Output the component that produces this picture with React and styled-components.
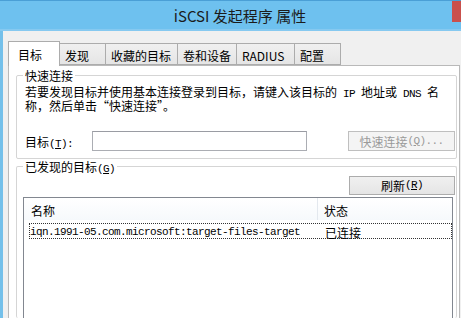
import styled, { createGlobalStyle } from "styled-components";

const Global = createGlobalStyle`
  html, body {
    margin: 0;
    background: #f0f0f0;
  }
  * {
    box-sizing: border-box;
  }
`;

const Window = styled.div`
  width: 461px;
  height: 318px;
  overflow: hidden;
  display: flex;
  flex-direction: column;
  font-family: "Noto Sans CJK SC", sans-serif;
  font-size: 12px;
  color: #000;
`;

const TitleBar = styled.div`
  height: 31px;
  flex: none;
  display: flex;
  align-items: flex-start;
  background: #6ec1ef;
  border-top: 1px solid #4a9fd6;
  box-shadow: inset 0 -2px 0 #86c9f0;
`;

const Title = styled.div`
  flex: 1;
  height: 29px;
  padding-left: 28px;
  display: flex;
  align-items: center;
  justify-content: center;
  font-size: 15px;
  color: #1b1b1b;
`;

const Close = styled.div`
  width: 9px;
  height: 21px;
  background: #c9504c;
`;

const Body = styled.div`
  flex: 1;
  display: flex;
  flex-direction: column;
  border-left: 3px solid #74c0ea;
  padding-left: 5px;
  min-height: 0;
`;

const TabStrip = styled.div`
  height: 34px;
  flex: none;
  display: flex;
  align-items: flex-end;
`;

const Tab = styled.div`
  width: ${(p) => p.$w}px;
  height: ${(p) => (p.$active ? 25 : 22)}px;
  margin-bottom: ${(p) => (p.$active ? -1 : 0)}px;
  margin-left: ${(p) => (p.$first ? 0 : -1)}px;
  padding-left: ${(p) => (p.$active ? 9 : 5)}px;
  padding-top: ${(p) => (p.$active ? 1 : 2)}px;
  display: flex;
  align-items: center;
  border: 1px solid #acacac;
  border-bottom: ${(p) => (p.$active ? "none" : "1px solid #acacac")};
  background: ${(p) =>
    p.$active ? "#ffffff" : "linear-gradient(#f0f0f0, #e5e5e5)"};
  position: relative;
  z-index: ${(p) => (p.$active ? 1 : 0)};
  white-space: nowrap;
`;

const Panel = styled.div`
  flex: 1;
  margin-right: 1px;
  background: #ffffff;
  border: 1px solid #b9b9b9;
  border-bottom: none;
  padding: 9px 2px 0 7px;
  display: flex;
  flex-direction: column;
  min-height: 0;
`;

const Group = styled.div`
  position: relative;
  border: 1px solid #d5d5d5;
  border-radius: 2px;
  margin-top: ${(p) => p.$mt || 0}px;
  padding: ${(p) => p.$pad};
  display: flex;
  flex-direction: column;
  flex: ${(p) => (p.$grow ? 1 : "none")};
  border-bottom: ${(p) => (p.$grow ? "none" : "1px solid #d5d5d5")};
  min-height: 0;
`;

const Legend = styled.span`
  position: absolute;
  top: -8px;
  left: 6px;
  padding: 0 2px;
  line-height: 16px;
  background: #ffffff;
`;

const Mono = styled.span`
  font-family: "Liberation Mono", monospace;
  font-size: 11px;
  letter-spacing: -0.6px;
  line-height: 1;
`;

const Key = styled.span`
  text-decoration: underline;
`;

const Para = styled.p`
  margin: 0 0 19px;
  line-height: 12px;
`;

const FormRow = styled.div`
  display: flex;
  align-items: center;
  height: 20px;
`;

const Label = styled.label`
  width: 67px;
  flex: none;
`;

const Input = styled.div`
  width: 215px;
  height: 20px;
  border: 1px solid #abadb3;
  border-top-color: #9a9ca3;
  background: #ffffff;
`;

const Button = styled.div`
  margin-left: auto;
  width: ${(p) => p.$w}px;
  height: ${(p) => p.$h}px;
  display: flex;
  align-items: center;
  justify-content: center;
  border: 1px solid ${(p) => (p.$disabled ? "#bfbfbf" : "#acacac")};
  background: ${(p) =>
    p.$disabled ? "#f4f4f4" : "linear-gradient(#f0f0f0, #e5e5e5)"};
  color: ${(p) => (p.$disabled ? "#9a9a9a" : "#000")};
  white-space: nowrap;
`;

const ButtonRow = styled.div`
  display: flex;
`;

const ListView = styled.div`
  flex: 1;
  margin: 2px 2px 0 6px;
  border: 1px solid #828790;
  border-bottom: none;
  background: #ffffff;
  min-height: 0;
`;

const Header = styled.div`
  display: grid;
  grid-template-columns: 294px 1fr;
  height: 22px;
  background: linear-gradient(#ffffff, #f6f9fc);
`;

const HeadCell = styled.div`
  display: flex;
  align-items: center;
  padding: 2px 0 0 ${(p) => p.$pl}px;
  border-right: ${(p) => (p.$divider ? "1px solid #e3e8ee" : "none")};
`;

const Row = styled.div`
  display: grid;
  grid-template-columns: 295px 1fr;
  align-items: center;
  height: 16px;
  margin: 3px 0 0 5px;
  border: 1px dotted #333;
`;

const tabs = [
  { label: "目标", w: 52, active: true },
  { label: "发现", w: 47 },
  { label: "收藏的目标", w: 73 },
  { label: "卷和设备", w: 60 },
  { label: "RADIUS", w: 59 },
  { label: "配置", w: 47 },
];

export default function App() {
  return (
    <Window>
      <Global />
      <TitleBar>
        <Title>iSCSI 发起程序 属性</Title>
        <Close />
      </TitleBar>
      <Body>
        <TabStrip>
          {tabs.map((t, i) => (
            <Tab key={t.label} $w={t.w} $active={t.active} $first={i === 0}>
              {t.label}
            </Tab>
          ))}
        </TabStrip>
        <Panel>
          <Group $pad="10px 1px 7px 8px">
            <Legend>快速连接</Legend>
            <Para>
              若要发现目标并使用基本连接登录到目标，请键入该目标的
              <Mono> IP </Mono>地址或<Mono> DNS </Mono>名
              <br />
              称，然后单击“快速连接”。
            </Para>
            <FormRow>
              <Label>
                目标
                <Mono>
                  (<Key>T</Key>):
                </Mono>
              </Label>
              <Input />
              <Button $w={107} $h={20} $disabled>
                快速连接
                <Mono>
                  (<Key>Q</Key>)...
                </Mono>
              </Button>
            </FormRow>
          </Group>
          <Group $mt={7} $pad="9px 1px 0 0" $grow>
            <Legend>
              已发现的目标
              <Mono>
                (<Key>G</Key>)
              </Mono>
            </Legend>
            <ButtonRow>
              <Button $w={106} $h={19}>
                刷新
                <Mono>
                  (<Key>R</Key>)
                </Mono>
              </Button>
            </ButtonRow>
            <ListView>
              <Header>
                <HeadCell $pl={7} $divider>
                  名称
                </HeadCell>
                <HeadCell $pl={6}>状态</HeadCell>
              </Header>
              <Row>
                <Mono>iqn.1991-05.com.microsoft:target-files-target</Mono>
                <span>已连接</span>
              </Row>
            </ListView>
          </Group>
        </Panel>
      </Body>
    </Window>
  );
}
